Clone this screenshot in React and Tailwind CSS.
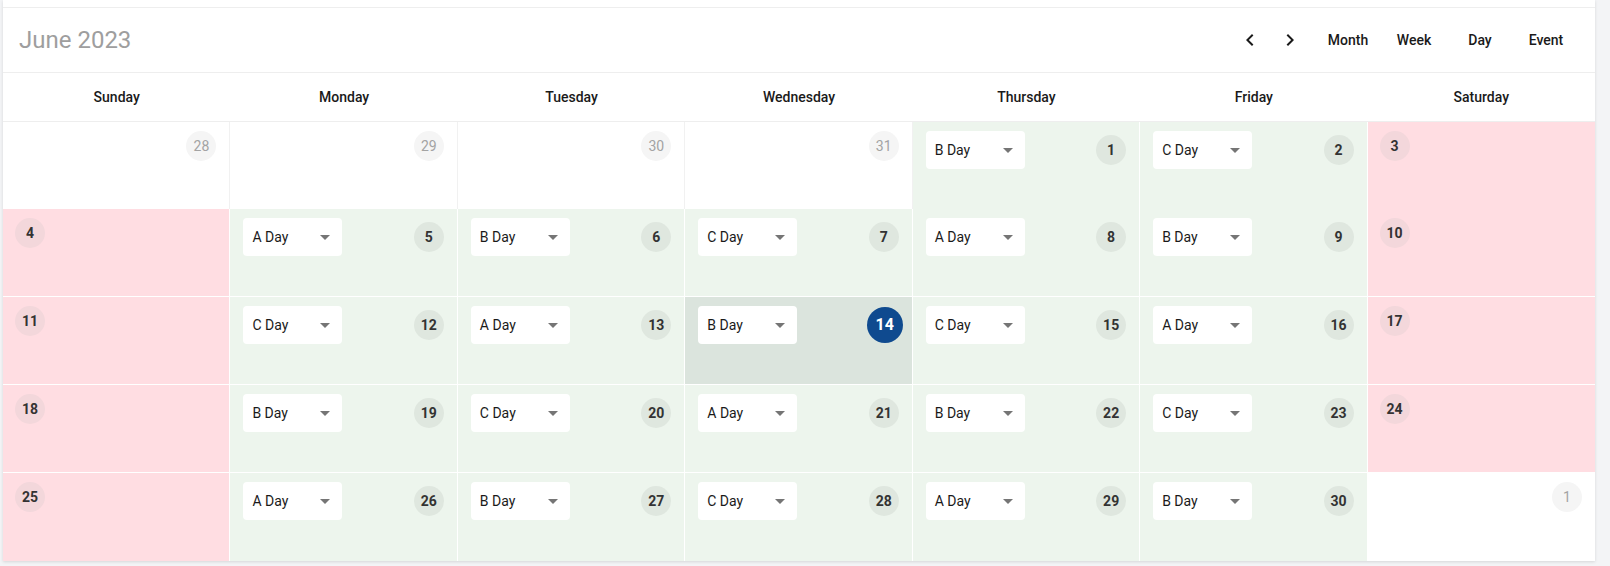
import React from "react";

const DAYS = ["Sunday", "Monday", "Tuesday", "Wednesday", "Thursday", "Friday", "Saturday"];

function buildCells() {
  const cells = [];
  [28, 29, 30, 31].forEach((d) => cells.push({ day: d, out: true }));
  let n = 1;
  for (let i = 4; i < 35; i++) {
    if (n > 30) {
      cells.push({ day: n - 30, out: true });
    } else {
      cells.push({ day: n, out: false });
    }
    n++;
  }
  const letters = ["A", "B", "C"];
  let k = 1;
  cells.forEach((c, i) => {
    const col = i % 7;
    c.weekend = col === 0 || col === 6;
    if (!c.out && !c.weekend) {
      c.value = letters[k % 3] + " Day";
      k++;
    }
  });
  return cells;
}

function Caret() {
  return (
    <svg width="24" height="24" viewBox="0 0 24 24" className="shrink-0">
      <path d="M7 10l5 5 5-5z" fill="#757575" />
    </svg>
  );
}

function Select({ value }) {
  return (
    <div className="flex h-[38px] w-[99px] items-center justify-between rounded-[4px] bg-white pl-[9px] pr-[5px] text-[14px] text-[#1a1a1a]">
      <span>{value}</span>
      <Caret />
    </div>
  );
}

function Cell({ c, idx }) {
  const col = idx % 7;
  const row = Math.floor(idx / 7);
  const today = !c.out && c.day === 14;
  let bg = "bg-white";
  let border = "border-[#f1f1f1]";
  if (!c.out) {
    if (c.weekend) {
      bg = "bg-[#ffdde2]";
    } else if (today) {
      bg = "bg-[#dbe4dd]";
    } else {
      bg = "bg-[#edf5ed]";
    }
    border = "border-white";
  }
  const rightB = col === 6 ? "" : "border-r";
  const bottomB = row === 4 || row === 0 ? "" : "border-b";
  const h = row === 0 ? "h-[87px]" : "h-[88px]";

  let content;
  if (c.out) {
    content = (
      <div className="flex justify-end pt-[9px] pr-[13px]">
        <div className="flex h-[30px] w-[30px] items-center justify-center rounded-full bg-[#f5f5f5] text-[14px] text-[#a3a3a3]">
          {c.day}
        </div>
      </div>
    );
  } else if (c.weekend) {
    content = (
      <div className="flex pt-[9px] pl-[12px]">
        <div className="flex h-[30px] w-[30px] items-center justify-center rounded-full bg-[#f3d7db] text-[14px] font-bold text-[#333333]">
          {c.day}
        </div>
      </div>
    );
  } else {
    content = (
      <div className="flex items-center justify-between pt-[9px] pl-[13px] pr-[9px]">
        <Select value={c.value} />
        {today ? (
          <div className="flex h-[36px] w-[36px] items-center justify-center rounded-full bg-[#0f4a8f] text-[16px] font-bold text-white">
            {c.day}
          </div>
        ) : (
          <div className="mr-[4px] flex h-[30px] w-[30px] items-center justify-center rounded-full bg-[#dfe7df] text-[14px] font-bold text-[#333333]">
            {c.day}
          </div>
        )}
      </div>
    );
  }
  return <div className={`${h} ${bg} ${border} ${rightB} ${bottomB}`}>{content}</div>;
}

export default function App() {
  const cells = buildCells();
  return (
    <div className="h-[566px] w-[1610px] overflow-hidden bg-[#f3f4f6] font-[Roboto,sans-serif]">
      <div className="ml-[3px] w-[1592px] bg-white shadow-[0_1px_3px_rgba(0,0,0,0.12)]">
        <div className="h-[8px] border-b border-[#eeeeee]" />
        <div className="flex h-[65px] items-center justify-between border-b border-[#eeeeee] pl-[16px] pr-[16px]">
          <div className="text-[24px] font-normal text-[#9e9e9e]">June 2023</div>
          <div className="flex items-center text-[14px] font-medium text-[#1a1a1a]">
            <button className="flex h-[40px] w-[40px] items-center justify-center">
              <svg width="24" height="24" viewBox="0 0 24 24">
                <path d="M15.41 7.41 14 6l-6 6 6 6 1.41-1.41L10.83 12z" fill="#1a1a1a" />
              </svg>
            </button>
            <button className="flex h-[40px] w-[40px] items-center justify-center">
              <svg width="24" height="24" viewBox="0 0 24 24">
                <path d="M10 6 8.59 7.41 13.17 12l-4.58 4.59L10 18l6-6z" fill="#1a1a1a" />
              </svg>
            </button>
            <div className="w-[5px]" />
            <button className="h-[36px] w-[66px]">Month</button>
            <button className="h-[36px] w-[66px]">Week</button>
            <button className="h-[36px] w-[66px]">Day</button>
            <button className="h-[36px] w-[66px]">Event</button>
          </div>
        </div>
        <div className="grid h-[49px] grid-cols-7 items-center border-b border-[#eeeeee] text-[14px] font-medium text-[#1a1a1a]">
          {DAYS.map((d) => (
            <div key={d} className="text-center">
              {d}
            </div>
          ))}
        </div>
        <div className="grid grid-cols-7">
          {cells.map((c, i) => (
            <Cell key={i} c={c} idx={i} />
          ))}
        </div>
      </div>
    </div>
  );
}
